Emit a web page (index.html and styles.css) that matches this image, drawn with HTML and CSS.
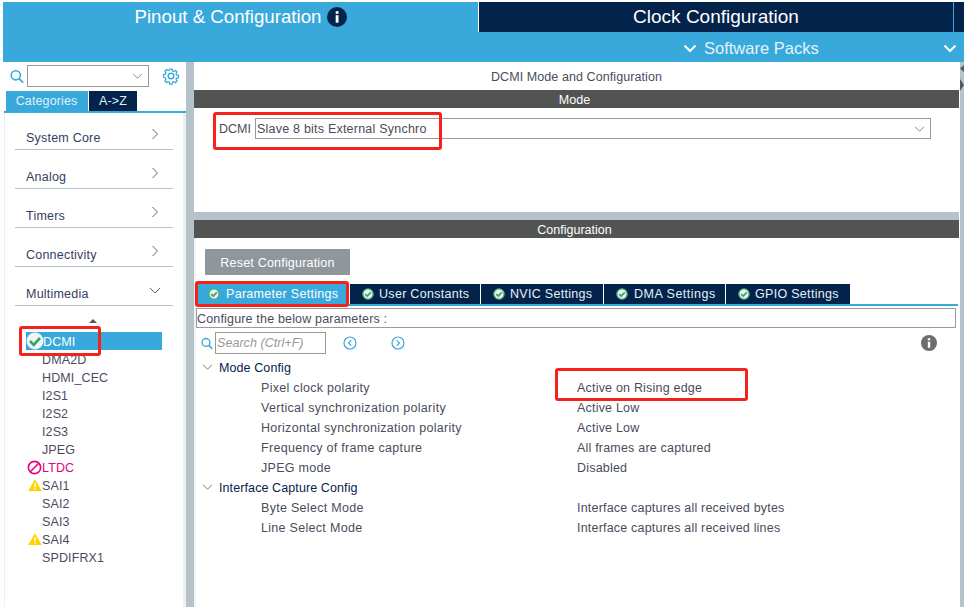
FILE: index.html
```html
<!DOCTYPE html>
<html lang="en">
<head>
<meta charset="utf-8">
<title>Pinout &amp; Configuration</title>
<link rel="stylesheet" href="styles.css">
</head>
<body>
<svg class="defs" width="0" height="0" aria-hidden="true">
  <symbol id="ok" viewBox="0 0 14 14">
    <circle cx="7" cy="7" r="6" fill="#e8f5ee" stroke="#4cae78" stroke-width="1.600"/>
    <path d="M3.800 7.200l2.300 2.300 4.200-4.400" fill="none" stroke="#3f9e68" stroke-width="2"/>
  </symbol>
  <symbol id="warn" viewBox="0 0 14 12">
    <path d="M7 .3L13.800 12H.2z" fill="#ffd200"/>
    <rect x="6.300" y="4" width="1.400" height="4.400" fill="#fff"/>
    <rect x="6.300" y="9.200" width="1.400" height="1.400" fill="#fff"/>
  </symbol>
  <symbol id="down" viewBox="0 0 12 8">
    <path d="M1 1l5 5 5-5" fill="none" stroke="currentColor" stroke-width="1"/>
  </symbol>
  <symbol id="down-bold" viewBox="0 0 14 9">
    <path d="M1.500 1.500L7 7l5.500-5.500" fill="none" stroke="currentColor" stroke-width="2"/>
  </symbol>
  <symbol id="right" viewBox="0 0 8 12">
    <path d="M1.500 1l5 5-5 5" fill="none" stroke="currentColor" stroke-width="1"/>
  </symbol>
  <symbol id="lens" viewBox="0 0 14 14">
    <circle cx="5.800" cy="5.800" r="4.600" fill="none" stroke="#39a9dc" stroke-width="1.600"/>
    <path d="M9.200 9.200l4 4" stroke="#39a9dc" stroke-width="1.800"/>
  </symbol>
</svg>

<div class="app">
  <header class="top">
    <div class="perspectives">
      <div class="persp persp-active">
        <span>Pinout &amp; Configuration</span>
        <svg class="info-head" viewBox="0 0 20 20"><circle cx="10" cy="10" r="10" fill="#03234b"/><rect x="8.700" y="8.200" width="2.800" height="7.500" fill="#fff"/><rect x="8.700" y="4.200" width="2.800" height="2.600" fill="#fff"/></svg>
      </div>
      <div class="persp persp-dark">Clock Configuration</div>
      <div class="persp-end"></div>
    </div>
    <div class="packs">
      <div class="packs-main">
        <svg class="packs-chev"><use href="#down-bold"/></svg>
        <span>Software Packs</span>
      </div>
      <svg class="packs-chev packs-last"><use href="#down-bold"/></svg>
    </div>
  </header>

  <div class="main">
    <aside class="side">
      <div class="side-search">
        <svg class="lens-lg"><use href="#lens"/></svg>
        <div class="combo"><svg class="combo-chev"><use href="#down"/></svg></div>
        <svg class="gear" viewBox="0 0 18 18"><path d="M7.500 1h3l.4 2.200 1.500.7 1.900-1.200 2 2.100-1.200 1.800.6 1.500 2.300.5v2.900l-2.300.5-.6 1.500 1.200 1.800-2 2.100-1.900-1.200-1.500.7-.4 2.200h-3l-.4-2.200-1.500-.7-1.900 1.200-2-2.100 1.200-1.800-.6-1.500L0 10.500V7.600l2.300-.5.6-1.500-1.200-1.800 2-2.100 1.900 1.200 1.500-.7z" transform="translate(1.500 1.200) scale(.83)" fill="none" stroke="#39a9dc" stroke-width="1.500"/><circle cx="9" cy="9" r="2.800" fill="none" stroke="#39a9dc" stroke-width="1.400"/></svg>
      </div>
      <div class="side-tabs">
        <div class="side-tab side-tab-on">Categories</div>
        <div class="side-tab side-tab-off">A-&gt;Z</div>
      </div>
      <div class="side-panel">
        <div class="cat"><span>System Core</span><svg class="cat-right"><use href="#right"/></svg></div>
        <div class="cat"><span>Analog</span><svg class="cat-right"><use href="#right"/></svg></div>
        <div class="cat"><span>Timers</span><svg class="cat-right"><use href="#right"/></svg></div>
        <div class="cat"><span>Connectivity</span><svg class="cat-right"><use href="#right"/></svg></div>
        <div class="cat"><span>Multimedia</span><svg class="cat-down"><use href="#down"/></svg></div>
        <div class="scroll-up"></div>
        <ul class="ip-list">
          <li class="ip ip-on"><svg class="ip-ok" viewBox="0 0 18 18"><circle cx="9" cy="9" r="8.500" fill="#eef7f5"/><path d="M4 9l3.700 3.800L14 6" fill="none" stroke="#3f9e68" stroke-width="2.600"/></svg>DCMI</li>
          <li class="ip">DMA2D</li>
          <li class="ip">HDMI_CEC</li>
          <li class="ip">I2S1</li>
          <li class="ip">I2S2</li>
          <li class="ip">I2S3</li>
          <li class="ip">JPEG</li>
          <li class="ip ip-no"><svg class="ip-ban" viewBox="0 0 14 14"><circle cx="7" cy="7" r="5.700" fill="none" stroke="#e6007e" stroke-width="1.500"/><path d="M3 11l8-8" stroke="#e6007e" stroke-width="1.500"/></svg>LTDC</li>
          <li class="ip"><svg class="ip-icon"><use href="#warn"/></svg>SAI1</li>
          <li class="ip">SAI2</li>
          <li class="ip">SAI3</li>
          <li class="ip"><svg class="ip-icon"><use href="#warn"/></svg>SAI4</li>
          <li class="ip">SPDIFRX1</li>
        </ul>
      </div>
    </aside>

    <div class="splitter-v"></div>

    <div class="content">
      <section class="mode">
        <div class="mode-title">DCMI Mode and Configuration</div>
        <div class="bar">Mode</div>
        <div class="mode-row">
          <span class="mode-label">DCMI</span>
          <div class="mode-select"><span>Slave 8 bits External Synchro</span><svg class="combo-chev"><use href="#down"/></svg></div>
        </div>
      </section>
      <div class="splitter-h"></div>
      <section class="config">
        <div class="bar">Configuration</div>
        <div class="config-body">
          <button class="reset" type="button">Reset Configuration</button>
          <div class="tabs">
            <div class="tab tab-on"><svg class="tab-ok"><use href="#ok"/></svg>Parameter Settings</div>
            <div class="tab tab-user"><svg class="tab-ok"><use href="#ok"/></svg>User Constants</div>
            <div class="tab tab-nvic"><svg class="tab-ok"><use href="#ok"/></svg>NVIC Settings</div>
            <div class="tab tab-dma"><svg class="tab-ok"><use href="#ok"/></svg>DMA Settings</div>
            <div class="tab tab-gpio"><svg class="tab-ok"><use href="#ok"/></svg>GPIO Settings</div>
          </div>
          <div class="hint">Configure the below parameters :</div>
          <div class="tools">
            <svg class="lens-sm"><use href="#lens"/></svg>
            <div class="search">Search (Ctrl+F)</div>
            <svg class="nav nav-prev" viewBox="0 0 14 14"><circle cx="7" cy="7" r="6" fill="none" stroke="#39a9dc" stroke-width="1.200"/><path d="M8.200 4.400L5.600 7l2.600 2.600" fill="none" stroke="#39a9dc" stroke-width="1.200"/></svg>
            <svg class="nav nav-next" viewBox="0 0 14 14"><circle cx="7" cy="7" r="6" fill="none" stroke="#39a9dc" stroke-width="1.200"/><path d="M5.800 4.400L8.400 7l-2.600 2.600" fill="none" stroke="#39a9dc" stroke-width="1.200"/></svg>
            <svg class="info-sm" viewBox="0 0 16 16"><circle cx="8" cy="8" r="8" fill="#6b6d6e"/><rect x="6.800" y="6.800" width="2.400" height="6" fill="#fff"/><rect x="6.800" y="3.200" width="2.400" height="2.200" fill="#fff"/></svg>
          </div>
          <div class="tree">
            <div class="group"><svg class="group-chev"><use href="#down"/></svg>Mode Config</div>
            <div class="param"><span class="param-name">Pixel clock polarity</span><span>Active on Rising edge</span></div>
            <div class="param"><span class="param-name">Vertical synchronization polarity</span><span>Active Low</span></div>
            <div class="param"><span class="param-name">Horizontal synchronization polarity</span><span>Active Low</span></div>
            <div class="param"><span class="param-name">Frequency of frame capture</span><span>All frames are captured</span></div>
            <div class="param"><span class="param-name">JPEG mode</span><span>Disabled</span></div>
            <div class="group"><svg class="group-chev"><use href="#down"/></svg>Interface Capture Config</div>
            <div class="param"><span class="param-name">Byte Select Mode</span><span>Interface captures all received bytes</span></div>
            <div class="param"><span class="param-name">Line Select Mode</span><span>Interface captures all received lines</span></div>
          </div>
        </div>
      </section>
    </div>
    <div class="scrollbar">
      <svg class="scroll-marks" viewBox="0 0 4 28"><path d="M4 0L0 3.500 4 7zM0 14l4 6-4 6z" fill="#55595c"/></svg>
    </div>
  </div>

  <div class="mark mark-mode"></div>
  <div class="mark mark-dcmi"></div>
  <div class="mark mark-tab"></div>
  <div class="mark mark-value"></div>
</div>
</body>
</html>
```

FILE: styles.css
```css
* { box-sizing: border-box; }
html, body { margin: 0; padding: 0; background: #fff; }
body { font-family: "Liberation Sans", Arial, sans-serif; color: #4a4c5c; overflow: hidden; }
.defs { position: absolute; }
svg { display: block; }

.app { position: relative; width: 964px; height: 607px; padding: 2px 0 0 3px; display: flex; flex-direction: column; overflow: hidden; }

/* header */
.top { background: #39a9dc; color: #fff; flex: none; }
.perspectives { display: flex; height: 30px; }
.persp { display: flex; align-items: center; justify-content: center; font-size: 18.700px; }
.persp-active { width: 475px; gap: 5px; }
.persp-dark { width: 475px; background: #03234b; border-left: 1px solid #fff; font-size: 19px; }
.persp-end { flex: 1; margin-left: 1px; background: #03234b; }
.info-head { width: 20px; height: 20px; }
.packs { display: flex; align-items: center; height: 30px; padding-top: 2px; font-size: 16.500px; color: #e4f3fa; }
.packs-main { display: flex; align-items: center; gap: 7px; margin-left: 680px; }
.packs-chev { width: 14px; height: 9px; color: #fff; }
.packs-last { margin-left: 124px; }

/* layout */
.main { flex: 1; display: flex; min-height: 0; }
.side { width: 183px; flex: none; display: flex; flex-direction: column; }
.splitter-v { width: 8px; flex: none; background: #b6c2ca; }
.content { flex: 1; min-width: 0; display: flex; flex-direction: column; }
.scrollbar { width: 4px; margin-left: 1px; flex: none; background: #b6c2ca; padding-top: 3px; }
.scroll-marks { width: 4px; height: 28px; }

/* sidebar */
.side-search { display: flex; align-items: center; height: 24px; margin-top: 2px; padding-left: 7px; }
.lens-lg { width: 14px; height: 15px; }
.combo { width: 122px; height: 22px; margin-left: 3px; border: 1px solid #999; display: flex; align-items: center; justify-content: flex-end; padding-right: 5px; }
.combo-chev { width: 11px; height: 7px; color: #777; }
.gear { width: 18px; height: 18px; margin-left: 13px; }
.side-tabs { display: flex; margin: 3px 0 0 1px; padding-left: 2px; gap: 1px; height: 22px; border-bottom: 2px solid #39a9dc; font-size: 12.500px; letter-spacing: .15px; }
.side-tab { display: flex; align-items: center; justify-content: center; height: 20px; color: #dff1fa; }
.side-tab-on { width: 82px; background: #39a9dc; letter-spacing: .12px; padding-right: 1px; }
.side-tab-off { width: 48px; background: #03234b; }
.side-panel { flex: 1; margin-left: 1px; border-left: 1px solid #eceff1; border-right: 3px solid #eceff1; padding: 0 10px; display: flex; flex-direction: column; }
.cat { height: 39px; flex: none; border-bottom: 1px solid #b6c2ca; display: flex; align-items: flex-end; justify-content: space-between; padding: 0 14px 4px 11px; font-size: 12.500px; letter-spacing: .22px; color: #34405f; }
.cat:first-child { margin-top: -2px; }
.cat-right { width: 8px; height: 12px; color: #666; margin-bottom: 5px; }
.cat-down { width: 12px; height: 8px; color: #666; margin: 0 -2px 6px 0; }
.scroll-up { width: 0; height: 0; margin: 13px 0 0 74px; border: 4px solid transparent; border-top: 0; border-bottom: 4px solid #555; }
.ip-list { list-style: none; margin: 9px 0 0; padding: 0 0 0 11px; width: 147px; font-size: 12.500px; letter-spacing: .12px; }
.ip { height: 18px; padding: 1px 0 0 16px; display: flex; align-items: center; color: #4a4c5c; position: relative; }
.ip-on { background: #39a9dc; color: #fff; padding-left: 17px; }
.ip-no { color: #e6007e; }
.ip-ok { position: absolute; left: 0; top: 0; width: 18px; height: 18px; }
.ip-icon { position: absolute; left: 2px; top: 3px; width: 14px; height: 12px; }
.ip-ban { position: absolute; left: 1px; top: 2px; width: 15px; height: 15px; }

/* mode */
.mode { height: 150px; flex: none; }
.mode-title { height: 28px; padding-top: 1px; display: flex; align-items: center; justify-content: center; font-size: 12.500px; letter-spacing: .08px; color: #4a4c5c; }
.bar { height: 18px; padding: 1px 4px 0 0; background: #525453; color: #fff; font-size: 12.500px; display: flex; align-items: center; justify-content: center; }
.mode-row { display: flex; align-items: center; margin: 10px 0 0 25px; gap: 4px; font-size: 12.500px; }
.mode-select { width: 676px; height: 21px; border: 1px solid #999; display: flex; align-items: center; justify-content: space-between; padding: 1px 5px 0 1px; letter-spacing: .22px; }
.splitter-h { height: 8px; flex: none; background: #b6c2ca; }

/* config */
.config { flex: 1; min-height: 0; display: flex; flex-direction: column; }
.config-body { flex: 1; border-left: 2px solid #f1f3f5; }
.reset { display: block; width: 145px; height: 26px; margin: 11px 0 0 9px; padding: 1px 0 0; border: 0; background: #8f969c; color: #fff; font: 12.500px "Liberation Sans", Arial, sans-serif; letter-spacing: .2px; }
.tabs { display: flex; margin: 9px 1px 0 0; height: 22px; border-bottom: 2px solid #39a9dc; gap: 1px; font-size: 12.500px; letter-spacing: .3px; color: #e6f1f7; }
.tab { height: 20px; display: flex; align-items: center; background: #03234b; padding-left: 12px; gap: 5px; }
.tab-on { width: 152px; background: #39a9dc; margin-right: 1px; color: #fff; gap: 6px; }
.tab-user { width: 130px; }
.tab-nvic { width: 122px; }
.tab-dma { width: 121px; gap: 6px; letter-spacing: .5px; }
.tab-gpio { width: 124px; }
.tab-ok { width: 12px; height: 12px; flex: none; }
.hint { margin: 2px 0 0; width: 760px; height: 20px; border: 1px solid #999; padding: 1px 0 0; font-size: 12.500px; line-height: 19px; letter-spacing: .17px; white-space: nowrap; }
.tools { display: flex; align-items: center; height: 22px; margin-top: 4px; padding-left: 5px; }
.lens-sm { width: 12px; height: 13px; }
.search { width: 111px; height: 22px; margin-left: 2px; border: 1px solid #999; padding-left: 1px; font-size: 12.500px; line-height: 20px; font-style: italic; color: #999; letter-spacing: .05px; }
.nav { width: 14px; height: 14px; }
.nav-prev { margin-left: 17px; }
.nav-next { margin-left: 34px; }
.info-sm { width: 16px; height: 16px; margin-left: 516px; }
.tree { margin-top: 3px; font-size: 12.500px; letter-spacing: .2px; }
.group { height: 20px; padding: 1px 0 0 23px; display: flex; align-items: center; position: relative; color: #03234b; letter-spacing: .1px; }
.group-chev { position: absolute; left: 6px; top: 7px; width: 11px; height: 7px; color: #666; }
.param { height: 20px; padding: 1px 0 0 65px; display: flex; align-items: center; }
.param-name { width: 316px; flex: none; letter-spacing: .3px; }

/* red annotations drawn over the UI */
.mark { position: absolute; border: 3px solid #f5221b; border-radius: 3px; pointer-events: none; }
.mark-mode { left: 213px; top: 112px; width: 229px; height: 38px; }
.mark-dcmi { left: 19px; top: 326px; width: 82px; height: 30px; }
.mark-tab { left: 195px; top: 281px; width: 154px; height: 26px; }
.mark-value { left: 555px; top: 368px; width: 193px; height: 33px; }
```
